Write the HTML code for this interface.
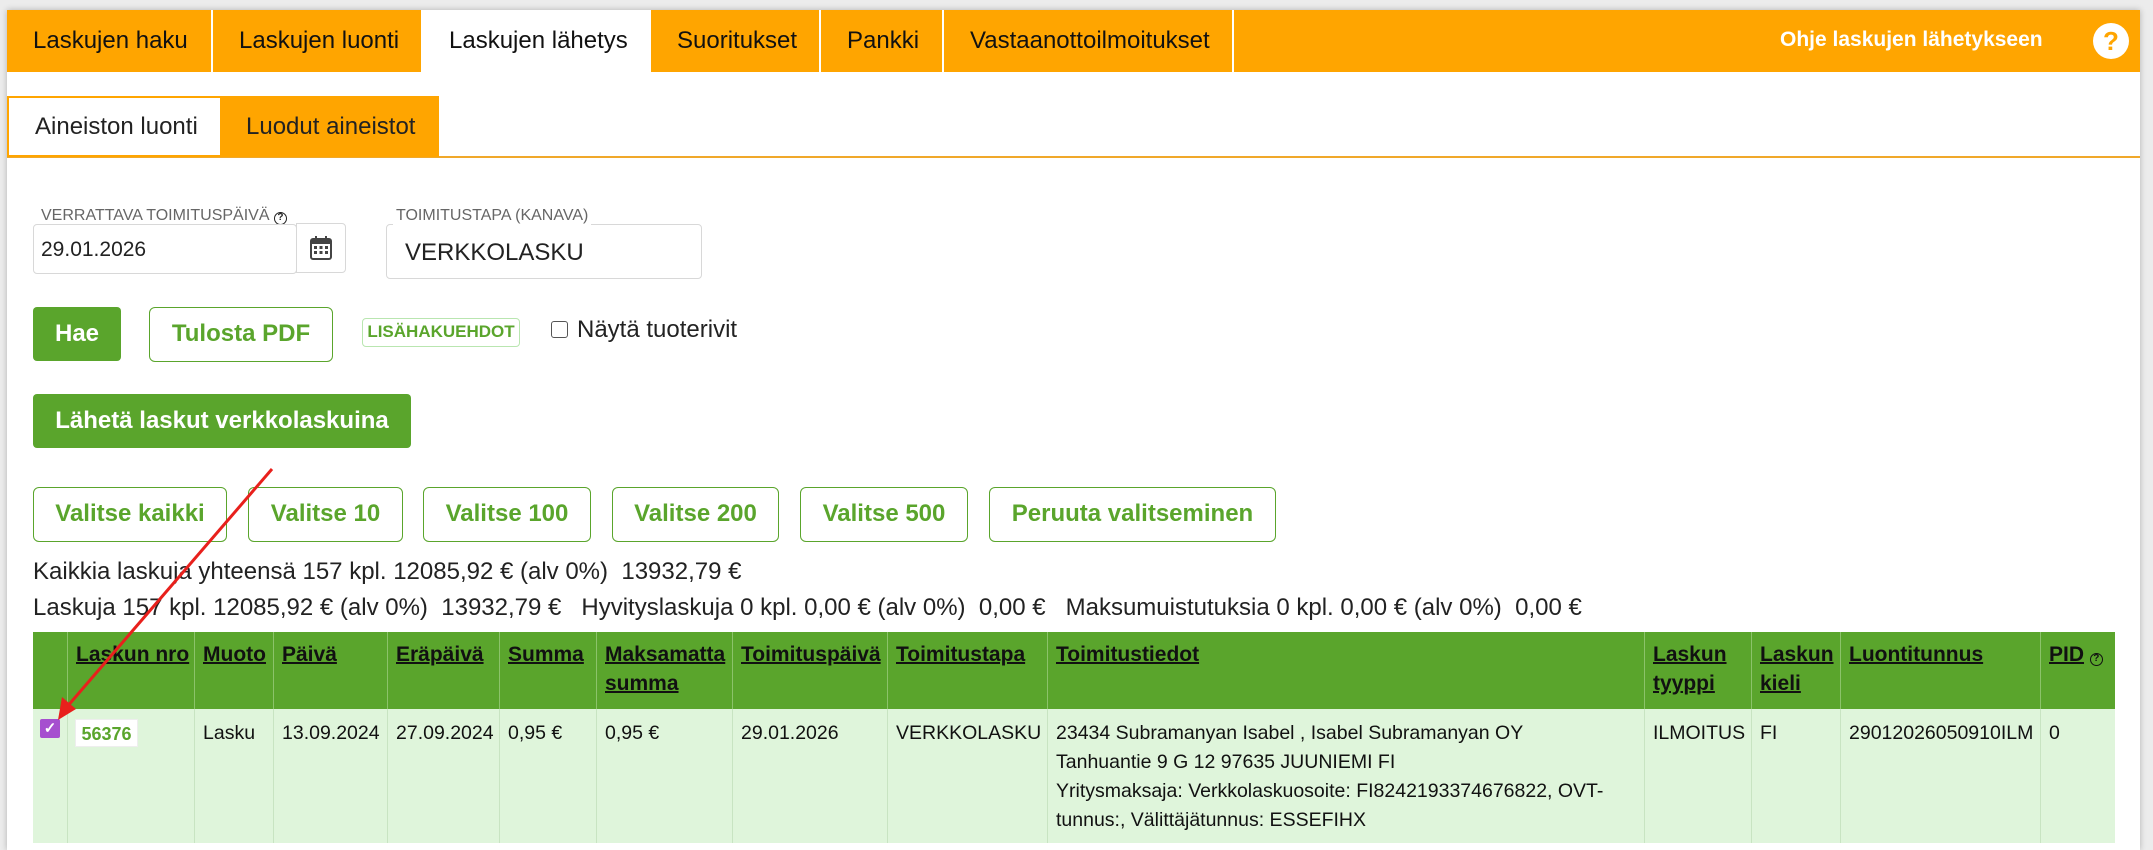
<!DOCTYPE html>
<html><head><meta charset="utf-8"><style>
*{box-sizing:border-box;margin:0;padding:0}
body{width:2153px;height:843px;overflow:hidden;background:#ececec;font-family:"Liberation Sans",Arial,sans-serif;color:#222;position:relative}
.page{position:absolute;left:7px;top:10px;width:2133px;height:840px;background:#fff;box-shadow:0 0 6px rgba(0,0,0,.25)}
.a{position:absolute}
.nav{left:7px;top:10px;width:2133px;height:62px;background:#ffa500}
.tab{position:absolute;top:10px;height:62px;font-size:24px;line-height:62px;padding-left:26px;border-right:2px solid #fff;color:#111;white-space:nowrap}
.sub{position:absolute;top:96px;height:61px;font-size:24px;line-height:61px;padding-left:26px;white-space:nowrap}
.lbl{font-size:16px;color:#666;white-space:nowrap}
.inp{border:1px solid #d8d8d8;border-radius:4px;background:#fff}
.gbtn{position:absolute;background:#5aa52c;color:#fff;font-weight:bold;font-size:24px;border-radius:4px;text-align:center;white-space:nowrap}
.obtn{position:absolute;border:1.5px solid #5aa52c;color:#5aa52c;font-weight:bold;font-size:24px;border-radius:6px;text-align:center;background:#fff;white-space:nowrap}
.txt{font-size:24px;color:#222;white-space:nowrap}
.th{position:absolute;top:632px;height:77px;background:#5aa52c;border-right:1px solid #8cc36a;font-size:21px;font-weight:bold;color:#111;padding:8px 0 0 8px;line-height:29px;white-space:nowrap}
.th u{text-decoration:underline;text-decoration-thickness:2px}
.td{position:absolute;top:709px;height:134px;background:#dff5db;border-right:1px solid #c8e4c2;font-size:19.5px;color:#111;padding:10px 0 0 8px;line-height:29px;white-space:nowrap}
</style></head><body>
<div class="page"></div>
<div class="a nav"></div>
<div class="tab" style="left:7px;width:206px">Laskujen haku</div>
<div class="tab" style="left:213px;width:210px">Laskujen luonti</div>
<div class="tab" style="left:423px;width:228px;background:#fff">Laskujen lähetys</div>
<div class="tab" style="left:651px;width:170px">Suoritukset</div>
<div class="tab" style="left:821px;width:123px">Pankki</div>
<div class="tab" style="left:944px;width:290px">Vastaanottoilmoitukset</div>
<div class="a" style="left:1780px;top:28px;font-size:21px;font-weight:bold;color:#fff">Ohje laskujen lähetykseen</div>
<div class="a" style="left:2093px;top:23px;width:36px;height:36px;border-radius:50%;background:#fff;color:#ffa500;font-weight:bold;font-size:26px;text-align:center;line-height:36px">?</div>

<div class="a" style="left:7px;top:156px;width:2133px;height:2px;background:#f0a82a"></div>
<div class="sub" style="left:7px;width:213px;border:2px solid #ffa500;border-right:none;line-height:57px">Aineiston luonti</div>
<div class="sub" style="left:220px;width:219px;background:#ffa500">Luodut aineistot</div>

<div class="a lbl" style="left:41px;top:207px">VERRATTAVA TOIMITUSPÄIVÄ <span style="display:inline-block;width:13px;height:13px;border:1.5px solid #222;border-radius:50%;font-size:10px;line-height:10px;text-align:center;color:#222;font-weight:bold">?</span></div>
<div class="a inp" style="left:33px;top:224px;width:264px;height:50px;font-size:21px;padding:13px 0 0 7px">29.01.2026</div>
<div class="a inp" style="left:296px;top:223px;width:50px;height:50px;border-radius:0 4px 4px 0"><svg width="24" height="26" style="position:absolute;left:12px;top:11px" viewBox="0 0 24 26"><rect x="2" y="4" width="20" height="20" rx="2" fill="none" stroke="#444" stroke-width="2"/><rect x="2" y="4" width="20" height="5" fill="#444"/><rect x="6" y="1" width="2" height="5" fill="#444"/><rect x="16" y="1" width="2" height="5" fill="#444"/><g fill="#444"><rect x="5" y="11" width="3" height="3"/><rect x="10.5" y="11" width="3" height="3"/><rect x="16" y="11" width="3" height="3"/><rect x="5" y="16" width="3" height="3"/><rect x="10.5" y="16" width="3" height="3"/><rect x="16" y="16" width="3" height="3"/></g></svg></div>
<div class="a inp" style="left:386px;top:224px;width:316px;height:55px;font-size:24px;padding:14px 0 0 18px">VERKKOLASKU</div>
<div class="a lbl" style="left:393px;top:207px;background:#fff;padding:0 3px;color:#666">TOIMITUSTAPA (KANAVA)</div>

<div class="gbtn" style="left:33px;top:307px;width:88px;height:54px;line-height:54px">Hae</div>
<div class="obtn" style="left:149px;top:307px;width:184px;height:55px;line-height:52px">Tulosta PDF</div>
<div class="a" style="left:362px;top:318px;width:158px;height:29px;border:1.5px solid #b9e6b0;border-radius:4px;color:#5aa52c;font-weight:bold;font-size:17px;text-align:center;line-height:26px">LISÄHAKUEHDOT</div>
<div class="a" style="left:551px;top:321px;width:17px;height:17px;border:1.5px solid #555;border-radius:3px"></div>
<div class="a txt" style="left:577px;top:316px">Näytä tuoterivit</div>

<div class="gbtn" style="left:33px;top:394px;width:378px;height:54px;line-height:54px">Lähetä laskut verkkolaskuina</div>

<div class="obtn" style="left:33px;top:487px;width:194px;height:55px;line-height:52px">Valitse kaikki</div>
<div class="obtn" style="left:248px;top:487px;width:155px;height:55px;line-height:52px">Valitse 10</div>
<div class="obtn" style="left:423px;top:487px;width:168px;height:55px;line-height:52px">Valitse 100</div>
<div class="obtn" style="left:612px;top:487px;width:167px;height:55px;line-height:52px">Valitse 200</div>
<div class="obtn" style="left:800px;top:487px;width:168px;height:55px;line-height:52px">Valitse 500</div>
<div class="obtn" style="left:989px;top:487px;width:287px;height:55px;line-height:52px">Peruuta valitseminen</div>

<div class="a txt" style="left:33px;top:558px">Kaikkia laskuja yhteensä 157 kpl. 12085,92 € (alv 0%)&nbsp; 13932,79 €</div>
<div class="a txt" style="left:33px;top:594px">Laskuja 157 kpl. 12085,92 € (alv 0%)&nbsp; 13932,79 €&nbsp;&nbsp; Hyvityslaskuja 0 kpl. 0,00 € (alv 0%)&nbsp; 0,00 €&nbsp;&nbsp; Maksumuistutuksia 0 kpl. 0,00 € (alv 0%)&nbsp; 0,00 €</div>

<div class="th" style="left:33px;width:35px"></div>
<div class="th" style="left:68px;width:127px"><u>Laskun nro</u></div>
<div class="th" style="left:195px;width:79px"><u>Muoto</u></div>
<div class="th" style="left:274px;width:114px"><u>Päivä</u></div>
<div class="th" style="left:388px;width:112px"><u>Eräpäivä</u></div>
<div class="th" style="left:500px;width:97px"><u>Summa</u></div>
<div class="th" style="left:597px;width:136px"><u>Maksamatta</u><br><u>summa</u></div>
<div class="th" style="left:733px;width:155px"><u>Toimituspäivä</u></div>
<div class="th" style="left:888px;width:160px"><u>Toimitustapa</u></div>
<div class="th" style="left:1048px;width:597px"><u>Toimitustiedot</u></div>
<div class="th" style="left:1645px;width:107px"><u>Laskun</u><br><u>tyyppi</u></div>
<div class="th" style="left:1752px;width:89px"><u>Laskun</u><br><u>kieli</u></div>
<div class="th" style="left:1841px;width:200px"><u>Luontitunnus</u></div>
<div class="th" style="left:2041px;width:74px;border-right:none"><u>PID</u> <span style="display:inline-block;width:13px;height:13px;border:1.5px solid #111;border-radius:50%;font-size:10px;line-height:10px;text-align:center">?</span></div>

<div class="td" style="left:33px;width:35px"><div style="position:absolute;left:7px;top:10px;width:20px;height:19px;background:#a64fcf;border-radius:2px;color:#fff;font-size:15px;line-height:19px;text-align:center;font-weight:bold">✓</div></div>
<div class="td" style="left:68px;width:127px"><div style="position:absolute;left:7px;top:10px;width:63px;height:28px;background:#fff;border:1px solid #eee;color:#5aa52c;font-weight:bold;font-size:18px;text-align:center;line-height:28px">56376</div></div>
<div class="td" style="left:195px;width:79px">Lasku</div>
<div class="td" style="left:274px;width:114px">13.09.2024</div>
<div class="td" style="left:388px;width:112px">27.09.2024</div>
<div class="td" style="left:500px;width:97px">0,95 €</div>
<div class="td" style="left:597px;width:136px">0,95 €</div>
<div class="td" style="left:733px;width:155px">29.01.2026</div>
<div class="td" style="left:888px;width:160px">VERKKOLASKU</div>
<div class="td" style="left:1048px;width:597px">23434 Subramanyan Isabel , Isabel Subramanyan OY<br>Tanhuantie 9 G 12 97635 JUUNIEMI FI<br>Yritysmaksaja: Verkkolaskuosoite: FI8242193374676822, OVT-<br>tunnus:, Välittäjätunnus: ESSEFIHX</div>
<div class="td" style="left:1645px;width:107px">ILMOITUS</div>
<div class="td" style="left:1752px;width:89px">FI</div>
<div class="td" style="left:1841px;width:200px">29012026050910ILM</div>
<div class="td" style="left:2041px;width:74px;border-right:none">0</div>

<svg class="a" style="left:0;top:0" width="2153" height="843"><line x1="272" y1="469" x2="66" y2="708" stroke="#e8201c" stroke-width="3"/><polygon points="58,720 62,697 76,709" fill="#e8201c"/></svg>
</body></html>
